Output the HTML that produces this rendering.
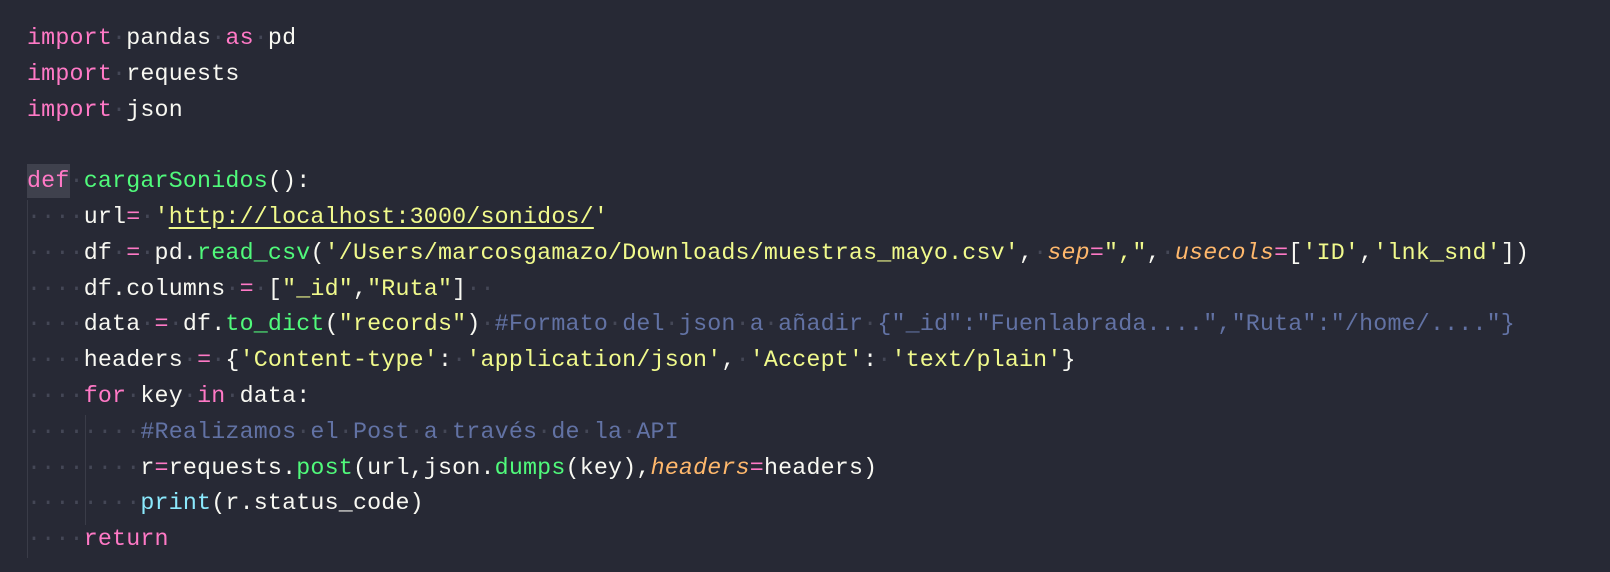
<!DOCTYPE html>
<html><head><meta charset="utf-8"><style>
html,body{margin:0;padding:0;width:1610px;height:572px;background:#272935;overflow:hidden}
#c{position:absolute;left:27px;top:21px;font-family:"Liberation Mono",monospace;font-size:23.3px;color:#f8f8f2;letter-spacing:0.19px}
#c div{height:35.8px;line-height:35.8px;white-space:pre}
#c span,#c i{line-height:35.8px}
i{font-style:normal;color:#444756}
.k{color:#ff79c6}.f{color:#50fa7b}.s{color:#f1fa8c}.c{color:#6272a4}.b{color:#8be9fd}.p{color:#ffb86c;font-style:italic}
.u{text-decoration:underline;text-underline-offset:4px}
.hl{background:#3f414d;display:inline-block;height:34px;line-height:34px}
.g{position:absolute;width:1px;background:#3a3c48}
</style></head><body>
<div class="g" style="left:27px;top:200px;height:358px"></div>
<div class="g" style="left:85px;top:415px;height:110px"></div>
<div id="c">
<div><span class="k">import</span><i>·</i>pandas<i>·</i><span class="k">as</span><i>·</i>pd</div>
<div><span class="k">import</span><i>·</i>requests</div>
<div><span class="k">import</span><i>·</i>json</div>
<div> </div>
<div><span class="k hl">def</span><i>·</i><span class="f">cargarSonidos</span>():</div>
<div><i>····</i>url<span class="k">=</span><i>·</i><span class="s">'<span class="u">http://localhost:3000/sonidos/</span>'</span></div>
<div><i>····</i>df<i>·</i><span class="k">=</span><i>·</i>pd.<span class="f">read_csv</span>(<span class="s">'/Users/marcosgamazo/Downloads/muestras_mayo.csv'</span>,<i>·</i><span class="p">sep</span><span class="k">=</span><span class="s">","</span>,<i>·</i><span class="p">usecols</span><span class="k">=</span>[<span class="s">'ID'</span>,<span class="s">'lnk_snd'</span>])</div>
<div><i>····</i>df.columns<i>·</i><span class="k">=</span><i>·</i>[<span class="s">"_id"</span>,<span class="s">"Ruta"</span>]<i>··</i></div>
<div><i>····</i>data<i>·</i><span class="k">=</span><i>·</i>df.<span class="f">to_dict</span>(<span class="s">"records"</span>)<i>·</i><span class="c">#Formato<i>·</i>del<i>·</i>json<i>·</i>a<i>·</i>añadir<i>·</i>{"_id":"Fuenlabrada....","Ruta":"/home/...."}</span></div>
<div><i>····</i>headers<i>·</i><span class="k">=</span><i>·</i>{<span class="s">'Content-type'</span>:<i>·</i><span class="s">'application/json'</span>,<i>·</i><span class="s">'Accept'</span>:<i>·</i><span class="s">'text/plain'</span>}</div>
<div><i>····</i><span class="k">for</span><i>·</i>key<i>·</i><span class="k">in</span><i>·</i>data:</div>
<div><i>········</i><span class="c">#Realizamos<i>·</i>el<i>·</i>Post<i>·</i>a<i>·</i>través<i>·</i>de<i>·</i>la<i>·</i>API</span></div>
<div><i>········</i>r<span class="k">=</span>requests.<span class="f">post</span>(url,json.<span class="f">dumps</span>(key),<span class="p">headers</span><span class="k">=</span>headers)</div>
<div><i>········</i><span class="b">print</span>(r.status_code)</div>
<div><i>····</i><span class="k">return</span></div>
</div>
</body></html>
